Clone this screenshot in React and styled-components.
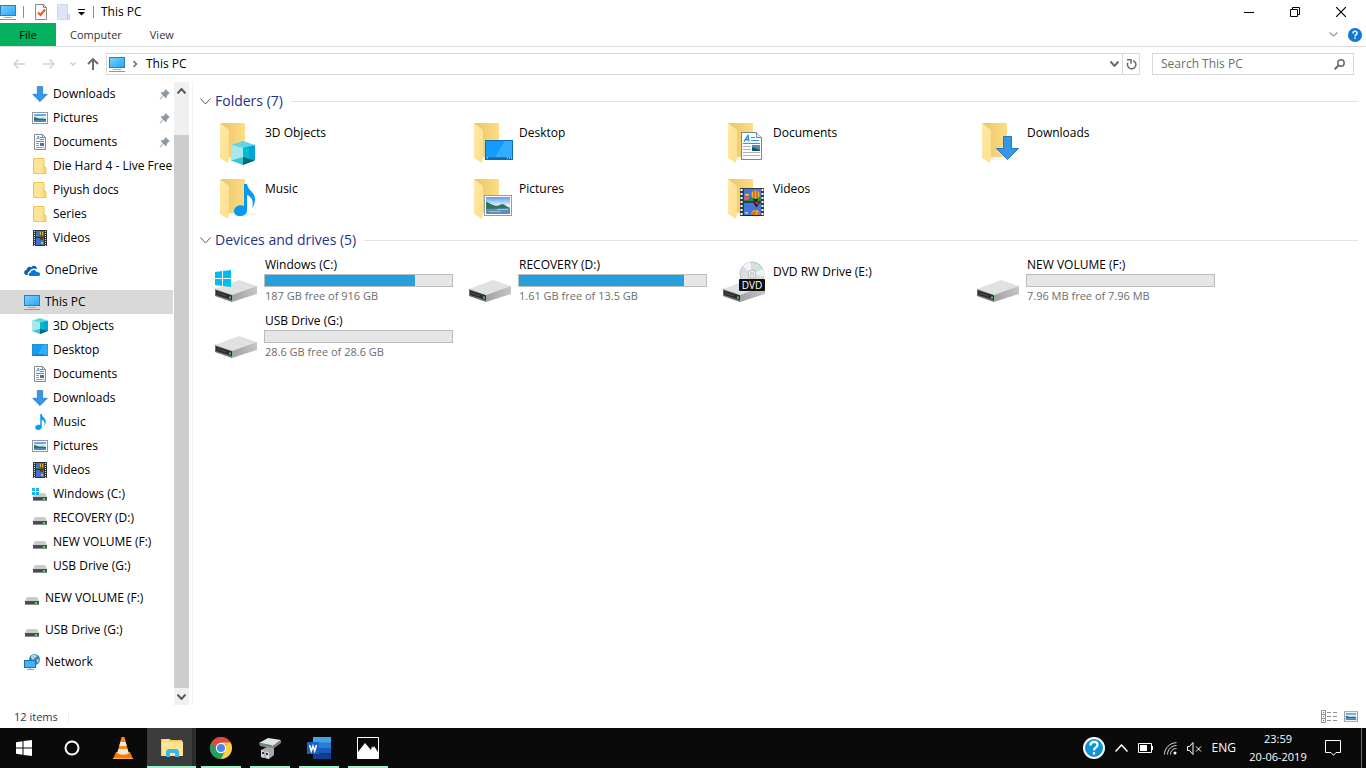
import React from 'react';
import styled, { createGlobalStyle } from 'styled-components';

const GlobalStyle = createGlobalStyle`
  * {
    box-sizing: border-box;
  }
  body {
    margin: 0;
    background: #ffffff;
    color: #000000;
    font-family: "Open Sans", "Noto Sans", sans-serif;
    font-size: 12px;
    line-height: 18px;
  }
  button, input {
    font: inherit;
    color: inherit;
    border: 0;
    padding: 0;
    background: none;
  }
  a {
    color: inherit;
    text-decoration: none;
  }
  svg {
    display: block;
    flex: none;
  }
`;

const Screen = styled.div`
  min-height: 100vh;
  display: flex;
  flex-direction: column;
`;

/* title bar */
const TitleBar = styled.header`
  height: 23px;
  display: flex;
  align-items: center;
`;
const Separator = styled.span`
  width: 1px;
  height: 12px;
  margin: 0 ${props => props.$after || 6}px 0 7px;
  background: #8c8c8c;
`;
const QuickButton = styled.button`
  margin-right: ${props => props.$gap || 0}px;
`;
const WindowTitle = styled.h1`
  flex: 1;
  margin: 0;
  font-size: 12px;
  font-weight: 400;
`;
const WindowButtons = styled.div`
  display: flex;
  padding-right: 2px;
`;
const WindowButton = styled.button`
  width: 46px;
  height: 21px;
  display: flex;
  align-items: center;
  justify-content: center;
`;

/* ribbon */
const Ribbon = styled.nav`
  height: 24px;
  display: flex;
  align-items: center;
  border-bottom: 1px solid #dadbdc;
`;
const FileTab = styled.button`
  width: 56px;
  height: 23px;
  background: #03b15e;
  font-size: 11px;
`;
const RibbonTab = styled.button`
  margin-left: 14px;
  margin-right: 14px;
  color: #333333;
  font-size: 11px;
`;
const RibbonEnd = styled.div`
  flex: 1;
  display: flex;
  justify-content: flex-end;
  align-items: center;
  gap: 10px;
  padding-right: 4px;
`;

/* address row */
const AddressRow = styled.div`
  display: flex;
  align-items: center;
  padding: 6px 12px 7px 13px;
`;
const NavButtons = styled.div`
  width: 93px;
  display: grid;
  grid-template-columns: 30px 27px 17px 12px;
  align-items: center;
`;
const AddressBox = styled.div`
  flex: 1;
  height: 22px;
  display: flex;
  align-items: center;
  border: 1px solid #d9d9d9;
  padding-left: 2px;
`;
const Crumb = styled.button`
  margin-left: 8px;
`;
const CrumbArrow = styled.span`
  margin-left: 8px;
`;
const AddressEnd = styled.div`
  flex: 1;
  display: flex;
  justify-content: flex-end;
  align-items: center;
  align-self: stretch;
  gap: 3px;
`;
const RefreshButton = styled.button`
  width: 17px;
  height: 20px;
  display: flex;
  align-items: center;
  justify-content: center;
  border-left: 1px solid #d9d9d9;
`;
const SearchBox = styled.form`
  width: 202px;
  height: 22px;
  margin-left: 12px;
  padding: 0 8px;
  display: flex;
  align-items: center;
  border: 1px solid #d9d9d9;
`;
const SearchInput = styled.input`
  flex: 1;
  min-width: 0;
  outline: none;
  &::placeholder {
    color: #6d6d6d;
    opacity: 1;
  }
`;

/* body */
const Body = styled.div`
  flex: 1;
  display: flex;
`;
const Sidebar = styled.nav`
  width: 173px;
  overflow: hidden;
`;
const SideGroup = styled.div`
  margin-bottom: 8px;
`;
const SideItem = styled.a`
  height: 24px;
  display: flex;
  align-items: center;
  gap: 5px;
  padding-left: ${props => (props.$nested ? 32 : 24)}px;
  background: ${props => (props.$active ? '#d9d9d9' : 'transparent')};
  white-space: nowrap;
`;
const IconSlot = styled.span`
  width: 16px;
  height: 16px;
  flex: none;
  display: flex;
  align-items: center;
  justify-content: center;
`;
const SideLabel = styled.span`
  flex: 1 0 auto;
`;
const PinSlot = styled.span`
  padding-right: 3px;
`;
const ScrollBar = styled.div`
  width: 15px;
  margin-left: 1px;
  display: flex;
  flex-direction: column;
  background: #f0f0f0;
`;
const ScrollButton = styled.button`
  height: 17px;
  display: flex;
  align-items: center;
  justify-content: center;
`;
const ScrollThumb = styled.div`
  flex: 1;
  margin-top: 36px;
  background: #cdcdcd;
`;
const Main = styled.main`
  flex: 1;
  margin-left: 3px;
  padding: 8px 8px 0 7px;
  border-left: 1px solid #f2f2f2;
`;
const GroupHeading = styled.h2`
  height: 22px;
  margin: 0 0 5px;
  display: flex;
  align-items: center;
  gap: 4px;
  color: #1e3287;
  font-size: 14px;
  font-weight: 400;
  &::after {
    content: '';
    flex: 1;
    height: 1px;
    margin-left: 4px;
    background: #e2e2e2;
  }
`;
const TileGrid = styled.div`
  display: grid;
  grid-template-columns: repeat(auto-fill, 254px);
  grid-auto-rows: 56px;
  padding-left: 11px;
`;
const Tile = styled.a`
  display: flex;
  gap: 5px;
`;
const TileIcon = styled.svg`
  width: 48px;
  height: 48px;
  margin-top: 4px;
`;
const TileBody = styled.div`
  width: 189px;
  padding-top: ${props => (props.$single ? 7 : 0)}px;
`;
const TileText = styled.div`
  padding-left: 1px;
  color: ${props => (props.$muted ? '#6d6d6d' : '#000000')};
  font-size: ${props => (props.$muted ? 11 : 12)}px;
`;
const UsageBar = styled.div`
  height: 13px;
  border: 1px solid #bcbcbc;
  background: #e6e6e6;
`;
const UsageFill = styled.div`
  height: 11px;
  background: #26a0da;
`;

const StatusBar = styled.footer`
  height: 23px;
  display: flex;
  align-items: center;
  padding: 0 8px 0 14px;
  color: #1e395b;
`;
const StatusText = styled.span`
  width: 55px;
  border-right: 1px solid #f0f0f0;
  font-size: 11px;
  line-height: 12px;
`;
const ViewButtons = styled.div`
  flex: 1;
  display: flex;
  justify-content: flex-end;
  align-items: center;
  gap: 7px;
`;

/* taskbar */
const Taskbar = styled.div`
  height: 40px;
  display: flex;
  background: #0a0a0b;
  color: #ffffff;
`;
const SystemButton = styled.button`
  width: 48px;
  display: flex;
  align-items: center;
  justify-content: center;
`;
const AppList = styled.div`
  flex: 1;
  display: flex;
  padding-left: 2px;
`;
const AppButton = styled.button`
  width: 49px;
  display: flex;
  align-items: center;
  justify-content: center;
  position: relative;
  background: ${props => (props.$active ? 'linear-gradient(90deg, #3c3c3d 45px, #202021 45px, #2c2c2d 46px)' : 'none')};
  &::after {
    content: '';
    display: ${props => (props.$running ? 'block' : 'none')};
    position: absolute;
    bottom: 0;
    left: ${props => (props.$active ? 0 : 5)}px;
    right: ${props => (props.$active ? 0 : 4)}px;
    height: 2px;
    background: #a0efc8;
  }
`;
const Tray = styled.div`
  display: flex;
  align-items: center;
  gap: 10px;
`;
const Clock = styled.button`
  width: 64px;
  font-size: 11px;
  text-align: center;
  white-space: nowrap;
`;
const ActionButton = styled.button`
  width: 26px;
  display: flex;
  justify-content: center;
`;
const ShowDesktop = styled.button`
  width: 5px;
  margin-left: 5px;
  align-self: stretch;
  border-left: 1px solid #6a6a6a;
`;

/* glyphs, used both in the tree and over the big folders */
const Pc = props => (
  <svg width="16" height="16" viewBox="0 0 16 16" {...props}>
    <defs>
      <linearGradient id="pcScreen" x1="0" y1="0" x2="1" y2="1">
        <stop offset="0" stopColor="#7cd0ff" />
        <stop offset="1" stopColor="#27a6f7" />
      </linearGradient>
    </defs>
    <rect x=".5" y="1.500" width="15" height="10" fill="url(#pcScreen)" stroke="#2d7fb3" />
    <path d="M4 13.500h8" stroke="#9fb2bf" />
    <path d="M0 15.500h16" stroke="#7e9cae" />
  </svg>
);

const Cube = props => (
  <svg width="16" height="16" viewBox="0 0 24 24" {...props}>
    <path d="M12 0 24 4 12 9 0 4z" fill="#5fd6e4" />
    <path d="M0 4 12 7v13L0 20z" fill="#c4f1f1" />
    <path d="M0 4 12 7v10L0 20z" fill="#a9e8ea" />
    <path d="M12 7 24 4v15l-12 5z" fill="#00a5d8" />
    <path d="M12 7 18 5.500v13L12 24z" fill="#00bcd0" />
    <path d="M0 19.500 12 16v8z" fill="#3fc3cd" />
    <path d="M12 16 24 19.500 12 24z" fill="#00687f" />
  </svg>
);

const Desktop = props => (
  <svg width="16" height="12" viewBox="0 0 28 20" preserveAspectRatio="none" {...props}>
    <rect x=".5" y=".5" width="27" height="19" fill="#149bfb" stroke="#0a6fb8" />
    <path d="M20 1h7v16H10z" fill="#35adff" />
    <path d="M1 17.500h26V19H1z" fill="#0b68ad" />
    <path d="M2 18h1M22 18h1M24 18h1M26 18h1" stroke="#ffffff" />
  </svg>
);

const Doc = props => (
  <svg width="21" height="28" viewBox="0 0 21 28" {...props}>
    <path d="M.5.500h15l5 5v22H.5z" fill="#fbfcfd" stroke="#7f8487" />
    <path d="M15.500.500v5h5" fill="#e6e8ea" stroke="#7f8487" />
    <path d="M3 9.500 7 3.500 8 9.500M4.500 7.500h3" fill="none" stroke="#1b8ad6" strokeWidth="1.300" />
    <path d="M10 5.500h4M10 8.500h8M2 11.500h17" stroke="#2b9be0" />
    <path d="M2 14.500h8M2 17.500h8M2 20.500h17M2 23.500h17" stroke="#aeb3b7" />
    <path d="M11 13h8v6h-8z" fill="#4a8ed0" />
    <path d="M11 15l8 3v1h-8z" fill="#24544f" />
  </svg>
);

const DocSmall = () => (
  <svg width="12" height="16" viewBox="0 0 12 16">
    <path d="M.5.500h8l3 3v12H.5z" fill="#fbfcfd" stroke="#85898c" />
    <path d="M8.500.500v3h3" fill="none" stroke="#85898c" />
    <path d="M2.500 5.500 4.500 2l.5 3.500M6 3.500h2M6 5.500h4M2 7.500h8" fill="none" stroke="#2b9be0" />
    <path d="M2 9.500h3M2 11.500h3M2 13.500h8" stroke="#9aa0a4" />
    <path d="M6 9h4v3H6z" fill="#3a7ca5" />
  </svg>
);

const Down = props => (
  <svg width="16" height="16" viewBox="0 0 23 24" {...props}>
    <path d="M7.500.500h8v12h7L11.500 23.500.500 12.500h7z" fill="#3697e8" stroke="#2379c4" />
  </svg>
);

const Note = props => (
  <svg width="11" height="16" viewBox="0 0 21 32" {...props}>
    <path d="M10 0h3c1 7 8 8 8 15 0 4-1 6-3 9 2-7 0-11-5-13v15c0 4-3 6-7 6-4 0-6-2-6-5 0-4 5-7 10-5z" fill="#069af3" />
  </svg>
);

const Picture = props => (
  <svg width="28" height="21" viewBox="0 0 28 21" {...props}>
    <defs>
      <linearGradient id="sky" x1="0" y1="0" x2="0" y2="1">
        <stop offset="0" stopColor="#5b9df0" />
        <stop offset=".5" stopColor="#e4f2fc" />
        <stop offset="1" stopColor="#6f9fc6" />
      </linearGradient>
    </defs>
    <rect x=".5" y=".5" width="27" height="20" fill="#ffffff" stroke="#979b9f" />
    <path d="M2 2h24v17H2z" fill="url(#sky)" />
    <path d="M2 7c2 0 4 2 7 3 3 1 4 1 7 0 2-2 4-1 6 1l4 2v1H2z" fill="#33735c" />
    <path d="M2 14l24-1v6H2z" fill="#5c8fb6" />
    <path d="M5 16.500h12M13 14.500h11" stroke="#9dc3dc" />
  </svg>
);

const PictureSmall = props => (
  <svg width="16" height="12" viewBox="0 0 16 12" {...props}>
    <rect x=".5" y=".5" width="15" height="11" fill="#ffffff" stroke="#92979b" />
    <path d="M2 2h12v8H2z" fill="#d6eafa" />
    <path d="M2 2h12v2H2z" fill="#6ba6f2" />
    <path d="M2 5c2 0 3 1.500 6 1.500 2 0 4-.5 6 .5v1H2z" fill="#2c7060" />
    <path d="M2 8h12v2H2z" fill="#4a86ba" />
  </svg>
);

const Film = props => (
  <svg width="14" height="16" viewBox="0 0 24 28" {...props}>
    <path d="M0 0h24v28H0z" fill="#3a3a3c" />
    <path d="M1.500 1v27M22.500 1v27" stroke="#ffffff" strokeWidth="2" strokeDasharray="2 2" />
    <path d="M4 1h17v12H4zM4 15h17v12H4z" fill="#3f78dc" />
    <path d="M4 9c3-2 6 1 9 1s5-1 8-1v4H4z" fill="#1d8c54" />
    <path d="M4 9c2-2 5-1 6 1l-2 2H4z" fill="#e0508c" />
    <circle cx="15.500" cy="6.500" r="4" fill="#f6b51e" />
    <path d="M14 3v7M17 3v7" stroke="#c62a1c" />
    <path d="M13 11h5l-1 2h-3zM13 14h7l-3 5h-1z" fill="#2a1a18" />
    <path d="M15 14h4l-2 3z" fill="#e2322b" />
    <circle cx="15.500" cy="26" r="4" fill="#f6b51e" />
    <path d="M15 22.500V27M18 24v3M13 24v3" stroke="#c62a1c" />
    <path d="M5 6h4v1.500H5zM5 24h3v1.500H5z" fill="#f2d04a" />
    <path d="M3 27h18v1H3z" fill="#222222" />
  </svg>
);

const FilmSmall = () => (
  <svg width="14" height="16" viewBox="0 0 14 16">
    <path d="M0 0h14v16H0z" fill="#303033" />
    <path d="M1.500 1v15M12.500 1v15" stroke="#e8e8e8" strokeDasharray="1 1" />
    <path d="M3 1h8v6H3zM3 8h8v7H3z" fill="#3f6fd0" />
    <path d="M3 5h8v2H3z" fill="#2d7a55" />
    <path d="M3 5h2v1H3z" fill="#d8578f" />
    <path d="M7 2h3v3H7zM8 12h2v2H8z" fill="#e8b526" />
    <path d="M8 2h1v3H8zM7 8h3v2H7z" fill="#8e2a24" />
  </svg>
);

const FolderSmall = () => (
  <svg width="14" height="16" viewBox="0 0 14 16">
    <path d="M.5.500h10.500v9h2v6H.5z" fill="#ffe593" stroke="#ebc550" />
    <path d="M11 9.500v6" stroke="#ebc550" />
  </svg>
);

const DriveSmall = ({ windows }) => (
  <svg width="16" height="16" viewBox="0 0 16 16">
    <path d="M3 7h10l2 4H1z" fill="#c9cbcd" />
    <path d="M1 11h14v4H1z" fill="#4c4f50" />
    <path d="M1 14.500h14" stroke="#8b8e90" />
    <path d="M11 12h2v2h-2z" fill="#2ee82e" />
    {windows && <path d="M0 2h3v3H0zM4 2h3v3H4zM0 6h3v3H0zM4 6h3v3H4z" fill="#17b6f0" />}
  </svg>
);

const Cloud = () => (
  <svg width="16" height="16" viewBox="0 0 16 16">
    <path d="M1 12.500C-.600 11 .200 8 2.500 8 2.800 5 6 4 7.500 5.300 9.500 2.500 13 4 13 7c-4-1.500-7 .5-7.500 2.500C3.500 10 3.300 12 4 13H2z" fill="#0a63b0" />
    <path d="M6 14c-2-.3-1.800-3.500.6-3.600C7 7.500 11.500 7 12.600 10 15 9.600 16.300 11 16 12.500c-.2 1-.9 1.500-1.600 1.500z" fill="#0b78d6" />
  </svg>
);

const NetworkIcon = () => (
  <svg width="16" height="16" viewBox="0 0 16 16">
    <circle cx="10.500" cy="5.500" r="5.500" fill="#3b88ab" />
    <path d="M7 2c2-2 5-1.500 6 0-1 2-2 1-3 3S7 5 7 2zM12 6l3-1-1 4z" fill="#aad6e6" />
    <rect x=".5" y="6.500" width="11" height="7" fill="#43b4fb" stroke="#1e6ea8" />
    <path d="M3 15.500h7M6 14v1" stroke="#8ba5b5" />
  </svg>
);

const Pin = () => (
  <svg width="11" height="11" viewBox="0 0 11 11">
    <path d="M6.500 0 11 4.500 9.500 5 8 6.500 7.500 9.500 4.500 7 1 10.500.500 10 4 6.500 1.500 3.500 4.500 3 6 1.500z" fill="#8b98a1" />
  </svg>
);

const Arrow = ({ dir, color, size = 12 }) => (
  <svg width={size} height="12" viewBox="0 0 12 12" fill="none" stroke={color} strokeWidth="1.500">
    {dir === 'left' && <path d="M12 6H1M5.500 1.500 1 6l4.500 4.500" />}
    {dir === 'right' && <path d="M0 6h11M6.500 1.500 11 6l-4.500 4.500" />}
    {dir === 'up' && <path d="M6 12V1M1 6l5-5 5 5" strokeWidth="2" />}
  </svg>
);

const Chevron = ({ w = 8, h = 5, color = '#5a5a5a', stroke = 2, up }) => (
  <svg width={w} height={h} viewBox={`0 0 ${w} ${h}`} fill="none" stroke={color} strokeWidth={stroke}>
    <path d={up ? `M.5 ${h - 0.5} ${w / 2} 1 ${w - 0.5} ${h - 0.5}` : `M.5 .5 ${w / 2} ${h - 1} ${w - 0.5} .5`} />
  </svg>
);

const FolderBase = () => (
  <g>
    <defs>
      <linearGradient id="folderBack" x1="0" y1="0" x2="1" y2="0">
        <stop offset="0" stopColor="#e8c566" />
        <stop offset="1" stopColor="#fddd86" />
      </linearGradient>
      <linearGradient id="folderFlap" x1="0" y1="0" x2="1" y2="1">
        <stop offset="0" stopColor="#ffe9a8" />
        <stop offset="1" stopColor="#fddf8c" />
      </linearGradient>
    </defs>
    <path d="M17 36h29l-3 3H18z" fill="#f4f4f4" />
    <path d="M9 2h25v34H17z" fill="url(#folderBack)" />
    <path d="M9 2l9 7v27l-1 6-8-5z" fill="url(#folderFlap)" />
  </g>
);

const DriveBase = () => (
  <g>
    <defs>
      <linearGradient id="driveSide" x1="0" y1="0" x2="1" y2="0">
        <stop offset="0" stopColor="#a0a1a3" />
        <stop offset="1" stopColor="#c5c6c8" />
      </linearGradient>
    </defs>
    <path d="M4 29 28 20l18 6-25 9z" fill="#e0e1e3" />
    <path d="M21 35l25-9v8l-25 8z" fill="url(#driveSide)" />
    <path d="M4 29l17 6v7L4 36z" fill="#6d6f70" />
    <path d="M5 30.500l16 5v4.500L5 35z" fill="#2b2d2e" />
    <path d="M6 33l9 3" stroke="#4d5052" />
    <path d="M18 36.500h2v2h-2z" fill="#30e030" />
  </g>
);

const overlays = {
  cube: <Cube x="20" y="20" width="24" height="24" />,
  desktop: <Desktop x="20" y="19" width="28" height="20" />,
  doc: <Doc x="22" y="11" />,
  down: <Down x="23" y="15" width="23" height="24" />,
  note: <Note x="23" y="7" width="21" height="32" />,
  picture: <Picture x="19" y="18" />,
  film: <Film x="21" y="11" width="24" height="28" />,
  windows: <path d="M4 12l7-1v7H4zM12 11l8-1v8h-8zM4 19h7v7l-7-1zM12 19h8v8l-8-1z" fill="#00bcf2" />,
  dvd: (
    <g>
      <circle cx="33" cy="14" r="12" fill="#d9dfe0" stroke="#b9bfc1" />
      <path d="M33 14 24 6a12 12 0 0 1 7-4zM33 14l11-5a12 12 0 0 1 1 7z" fill="#f3f6f6" />
      <path d="M33 14 22 11a12 12 0 0 1 2-4z" fill="#e9d3ec" />
      <path d="M33 14l8-8 2 3z" fill="#bdebd5" />
      <circle cx="33" cy="14" r="4" fill="#eef1f1" stroke="#b4babb" />
      <circle cx="33" cy="14" r="1.500" fill="#ffffff" stroke="#b4babb" />
      <rect x="20" y="19" width="26" height="12" rx="1" fill="#111111" />
      <text x="33" y="28.500" fontSize="10" textAnchor="middle" fill="#ffffff">DVD</text>
    </g>
  ),
};

const quickItems = [
  { label: 'Downloads', icon: <Down />, pinned: true },
  { label: 'Pictures', icon: <PictureSmall />, pinned: true },
  { label: 'Documents', icon: <DocSmall />, pinned: true },
  { label: 'Die Hard 4 - Live Free O', icon: <FolderSmall /> },
  { label: 'Piyush docs', icon: <FolderSmall /> },
  { label: 'Series', icon: <FolderSmall /> },
  { label: 'Videos', icon: <FilmSmall /> },
];

const pcItems = [
  { label: '3D Objects', icon: <Cube /> },
  { label: 'Desktop', icon: <Desktop /> },
  { label: 'Documents', icon: <DocSmall /> },
  { label: 'Downloads', icon: <Down /> },
  { label: 'Music', icon: <Note /> },
  { label: 'Pictures', icon: <PictureSmall /> },
  { label: 'Videos', icon: <FilmSmall /> },
  { label: 'Windows (C:)', icon: <DriveSmall windows /> },
  { label: 'RECOVERY (D:)', icon: <DriveSmall /> },
  { label: 'NEW VOLUME (F:)', icon: <DriveSmall /> },
  { label: 'USB Drive (G:)', icon: <DriveSmall /> },
];

const folders = [
  { label: '3D Objects', overlay: 'cube' },
  { label: 'Desktop', overlay: 'desktop' },
  { label: 'Documents', overlay: 'doc' },
  { label: 'Downloads', overlay: 'down' },
  { label: 'Music', overlay: 'note' },
  { label: 'Pictures', overlay: 'picture' },
  { label: 'Videos', overlay: 'film' },
];

const drives = [
  { label: 'Windows (C:)', overlay: 'windows', used: 80, free: '187 GB free of 916 GB' },
  { label: 'RECOVERY (D:)', used: 88, free: '1.61 GB free of 13.5 GB' },
  { label: 'DVD RW Drive (E:)', overlay: 'dvd' },
  { label: 'NEW VOLUME (F:)', used: 0, free: '7.96 MB free of 7.96 MB' },
  { label: 'USB Drive (G:)', used: 0, free: '28.6 GB free of 28.6 GB' },
];

function TreeItem({ icon, label, pinned, nested, active }) {
  return (
    <SideItem href="#" $nested={nested} $active={active}>
      <IconSlot>{icon}</IconSlot>
      <SideLabel>{label}</SideLabel>
      {pinned && <PinSlot><Pin /></PinSlot>}
    </SideItem>
  );
}

function Title() {
  return (
    <TitleBar>
      <Pc />
      <Separator $after={11} />
      <QuickButton aria-label="Properties" $gap={10}>
        <svg width="12" height="16" viewBox="0 0 12 16">
          <path d="M.5.500h8l3 3v12H.5z" fill="#fafafa" stroke="#8a8a8a" />
          <path d="M8.500.500v3h3" fill="none" stroke="#8a8a8a" />
          <path d="M3 8.500l2.500 2.500L10 5.500" fill="none" stroke="#e8571c" strokeWidth="2" />
        </svg>
      </QuickButton>
      <QuickButton aria-label="New folder" $gap={8}>
        <svg width="13" height="16" viewBox="0 0 13 16">
          <path d="M.5.500h10v10h2v5H.5z" fill="#dbe5f5" stroke="#ccd8ec" />
          <path d="M10.500 10v5" stroke="#b9c8e0" />
        </svg>
      </QuickButton>
      <QuickButton aria-label="Customize Quick Access Toolbar">
        <svg width="8" height="8" viewBox="0 0 8 8">
          <path d="M0 1.500h7" stroke="#000000" />
          <path d="M0 4h7L3.500 7.500z" />
        </svg>
      </QuickButton>
      <Separator $after={7} />
      <WindowTitle>This PC</WindowTitle>
      <WindowButtons>
        <WindowButton aria-label="Minimize">
          <svg width="10" height="10"><path d="M0 5.500h10" stroke="#000000" /></svg>
        </WindowButton>
        <WindowButton aria-label="Restore">
          <svg width="10" height="10" fill="none" stroke="#000000">
            <path d="M.5 2.500h7v7h-7zM2.500 2.500v-2h7v7h-2" />
          </svg>
        </WindowButton>
        <WindowButton aria-label="Close">
          <svg width="10" height="10"><path d="M0 0l10 10M10 0 0 10" stroke="#000000" strokeWidth="1.200" /></svg>
        </WindowButton>
      </WindowButtons>
    </TitleBar>
  );
}

function Address() {
  return (
    <AddressRow>
      <NavButtons>
        <button aria-label="Back"><Arrow dir="left" color="#d2d2d2" /></button>
        <button aria-label="Forward"><Arrow dir="right" color="#d2d2d2" /></button>
        <button aria-label="Recent locations"><Chevron w={6} h={4} color="#cfcfcf" stroke={1.5} /></button>
        <button aria-label="Up"><Arrow dir="up" color="#6e6e6e" /></button>
      </NavButtons>
      <AddressBox>
        <Pc />
        <CrumbArrow>
          <svg width="5" height="8" viewBox="0 0 5 8" fill="none" stroke="#6a6a6a" strokeWidth="1.500">
            <path d="M.5 1 3.500 4l-3 3" />
          </svg>
        </CrumbArrow>
        <Crumb>This PC</Crumb>
        <AddressEnd>
          <button aria-label="Previous locations"><Chevron w={9} h={6} color="#6a6a6a" /></button>
          <RefreshButton aria-label="Refresh">
            <svg width="11" height="12" viewBox="0 0 11 12" fill="none" stroke="#6a6a6a" strokeWidth="1.500">
              <path d="M7 2.600A4.200 4.200 0 1 1 2 4.500" />
              <path d="M1 1.700h4v4" />
            </svg>
          </RefreshButton>
        </AddressEnd>
      </AddressBox>
      <SearchBox role="search">
        <SearchInput type="text" placeholder="Search This PC" aria-label="Search This PC" />
        <svg width="11" height="11" viewBox="0 0 11 11" fill="none" stroke="#6a6a6a">
          <circle cx="7" cy="4" r="3.200" strokeWidth="1.500" />
          <path d="M4.500 6.500.700 10.300" strokeWidth="2" />
        </svg>
      </SearchBox>
    </AddressRow>
  );
}

function Folders() {
  return (
    <section>
      <GroupHeading><Chevron w={11} h={7} stroke={1} />Folders (7)</GroupHeading>
      <TileGrid>
        {folders.map(folder => (
          <Tile href="#" key={folder.label}>
            <TileIcon viewBox="0 0 48 48">
              <FolderBase />
              {overlays[folder.overlay]}
            </TileIcon>
            <TileBody $single>
              <TileText>{folder.label}</TileText>
            </TileBody>
          </Tile>
        ))}
      </TileGrid>
    </section>
  );
}

function Drives() {
  return (
    <section>
      <GroupHeading><Chevron w={11} h={7} stroke={1} />Devices and drives (5)</GroupHeading>
      <TileGrid>
        {drives.map(drive => (
          <Tile href="#" key={drive.label}>
            <TileIcon viewBox="0 0 48 48">
              <DriveBase />
              {overlays[drive.overlay]}
            </TileIcon>
            <TileBody $single={!drive.free}>
              <TileText>{drive.label}</TileText>
              {drive.free && (
                <>
                  <UsageBar>
                    <UsageFill style={{ width: `${drive.used}%` }} />
                  </UsageBar>
                  <TileText $muted>{drive.free}</TileText>
                </>
              )}
            </TileBody>
          </Tile>
        ))}
      </TileGrid>
    </section>
  );
}

function TaskbarRow() {
  return (
    <Taskbar>
      <SystemButton aria-label="Start">
        <svg width="16" height="16" viewBox="0 0 16 16">
          <path d="M0 2.200 6.500 1.300v6.200H0zM7.500 1.100 16 0v7.500H7.500zM0 8.500h6.500v6.200L0 13.800zM7.500 8.500H16V16l-8.500-1.100z" fill="#ffffff" />
        </svg>
      </SystemButton>
      <SystemButton aria-label="Cortana">
        <svg width="16" height="16"><circle cx="8" cy="8" r="6.500" fill="none" stroke="#ffffff" strokeWidth="2" /></svg>
      </SystemButton>
      <AppList>
        <AppButton aria-label="VLC media player">
          <svg width="20" height="22" viewBox="0 0 20 22">
            <path d="M3 15h14l3 7H0z" fill="#f07c00" />
            <path d="M8.500 0h3L16 17c-2 2-10 2-12 0z" fill="#f58a12" />
            <path d="M7.500 5h5l1.200 4H6.300zM5.500 12h9l1.200 4c-3 2-8 2-11.400 0z" fill="#e9e9e9" />
            <path d="M0 21h20v1H0z" fill="#ffb04a" />
          </svg>
        </AppButton>
        <AppButton aria-label="File Explorer" $running $active>
          <svg width="22" height="18" viewBox="0 0 22 18">
            <path d="M0 0h9l1 1h11v16H0z" fill="#f5c74c" />
            <path d="M1 2.500h21V17H1z" fill="#ffe48f" />
            <path d="M2 1h6" stroke="#ffffff" />
            <path d="M5 18v-6l2-2h9l2 2v6h-4v-4H9v4z" fill="#3fb4e8" />
          </svg>
        </AppButton>
        <AppButton aria-label="Google Chrome" $running>
          <svg width="22" height="22" viewBox="0 0 22 22">
            <circle cx="11" cy="11" r="11" fill="#dd4b3e" />
            <path d="M11 11 20.500 5.500A11 11 0 0 1 11 22z" fill="#fdcf45" />
            <path d="M1.500 5.500 11 11l3.500 4L11 22A11 11 0 0 1 1.500 5.500z" fill="#1fa261" />
            <path d="M1.500 5.500A11 11 0 0 1 20.500 5.500H11L6.500 13z" fill="#dd4b3e" />
            <path d="M11 5.500h9.500l.8 2H14z" fill="#fdcf45" />
            <circle cx="11" cy="11" r="5.200" fill="#ffffff" />
            <circle cx="11" cy="11" r="4" fill="#4a88ee" />
          </svg>
        </AppButton>
        <AppButton aria-label="Device tool" $running>
          <svg width="22" height="22" viewBox="0 0 22 22">
            <path d="M0 6 9 1l13 2-8 6z" fill="#e2e4e4" />
            <path d="M0 6l14 3 8-6v3l-8 6L1 9z" fill="#7f8383" />
            <path d="M2 6.500 12 8.500" stroke="#4e9a62" />
            <path d="M2 13l6-3 7 1v7l-5 4-8-2z" fill="#a5a8a8" />
            <path d="M2 13l8 2v7l-8-2z" fill="#d5d7d7" />
            <path d="M4 15v2M8 16v2" stroke="#38393a" strokeWidth="2" />
            <path d="M6 14v7" stroke="#8a8d8d" />
          </svg>
        </AppButton>
        <AppButton aria-label="Word" $running>
          <svg width="24" height="22" viewBox="0 0 24 22">
            <path d="M6 0h18v6H6z" fill="#41a5ee" />
            <path d="M6 5.500h18V11H6z" fill="#2b7cd3" />
            <path d="M6 11h18v5.500H6z" fill="#185abd" />
            <path d="M6 16.500h18V22H6z" fill="#103f91" />
            <path d="M0 5h12v12H0z" fill="#1b5fc0" />
            <path d="M2.500 8l1.800 6L6 9l1.700 5L9.500 8" fill="none" stroke="#ffffff" strokeWidth="1.500" />
          </svg>
        </AppButton>
        <AppButton aria-label="Photos" $running>
          <svg width="22" height="22" viewBox="0 0 22 22">
            <path d="M.5.500h21v21H.5z" fill="#0a0a0b" stroke="#ffffff" />
            <path d="M1 15 8 6l6 7 1-4 1 2 1-2 4 6v6H1z" fill="#ffffff" />
          </svg>
        </AppButton>
      </AppList>
      <Tray>
        <button aria-label="Help">
          <svg width="22" height="22" viewBox="0 0 22 22">
            <circle cx="11" cy="11" r="10" fill="#0d93d8" stroke="#ffffff" strokeWidth="2" />
            <path d="M7.500 8.500c0-5 7-4.500 7-.500 0 2.500-3.500 2.500-3.500 5.500M11 15v2.500" fill="none" stroke="#ffffff" strokeWidth="2.200" />
          </svg>
        </button>
        <button aria-label="Show hidden icons"><Chevron w={13} h={8} stroke={1.5} color="#ffffff" up /></button>
        <button aria-label="Battery">
          <svg width="16" height="10" viewBox="0 0 16 10">
            <path d="M.5.500h13v9H.5z" fill="none" stroke="#ffffff" />
            <path d="M2 2h7v6H2zM14 3h1v4h-1z" fill="#ffffff" />
          </svg>
        </button>
        <button aria-label="Network">
          <svg width="13" height="13" viewBox="0 0 13 13" fill="none" stroke="#d8d8d8">
            <path d="M.5 12.500C.5 6 6 .700 12.500.700M3.500 12.500c0-5 4-9 9-9M6.500 12.500c0-3.500 2.500-6 6-6" />
            <circle cx="11" cy="11" r="1.500" fill="#ffffff" stroke="none" />
          </svg>
        </button>
        <button aria-label="Volume muted">
          <svg width="15" height="13" viewBox="0 0 15 13" fill="none" stroke="#ffffff">
            <path d="M.5 4.500h2l3.500-4v12l-3.500-4h-2zM9 4.500l5 5M14 4.500l-5 5" />
          </svg>
        </button>
        <button>ENG</button>
        <Clock>23:59<br />20-06-2019</Clock>
        <ActionButton aria-label="Notifications">
          <svg width="17" height="16" viewBox="0 0 17 16" fill="none" stroke="#ffffff">
            <path d="M.5.500h15v12H11l-2.500 2.800L6 12.500H.5z" />
          </svg>
        </ActionButton>
        <ShowDesktop aria-label="Show desktop" />
      </Tray>
    </Taskbar>
  );
}

function App() {
  return (
    <Screen>
      <GlobalStyle />
      <Title />
      <Ribbon>
        <FileTab>File</FileTab>
        <RibbonTab>Computer</RibbonTab>
        <RibbonTab>View</RibbonTab>
        <RibbonEnd>
          <button aria-label="Expand the Ribbon"><Chevron w={9} h={5} stroke={1.2} color="#9a9a9a" /></button>
          <button aria-label="Help">
            <svg width="14" height="14" viewBox="0 0 14 14">
              <circle cx="7" cy="7" r="7" fill="#0f78d4" />
              <path d="M5 5.500c0-3 4-2.700 4-.3C9 7 7 6.800 7 8.500M7 9.500V11" fill="none" stroke="#ffffff" strokeWidth="1.500" />
            </svg>
          </button>
        </RibbonEnd>
      </Ribbon>
      <Address />
      <Body>
        <Sidebar>
          <SideGroup>
            {quickItems.map(item => <TreeItem key={item.label} nested {...item} />)}
          </SideGroup>
          <SideGroup>
            <TreeItem icon={<Cloud />} label="OneDrive" />
          </SideGroup>
          <SideGroup>
            <TreeItem icon={<Pc />} label="This PC" active />
            {pcItems.map(item => <TreeItem key={item.label} nested {...item} />)}
          </SideGroup>
          <SideGroup>
            <TreeItem icon={<DriveSmall />} label="NEW VOLUME (F:)" />
          </SideGroup>
          <SideGroup>
            <TreeItem icon={<DriveSmall />} label="USB Drive (G:)" />
          </SideGroup>
          <TreeItem icon={<NetworkIcon />} label="Network" />
        </Sidebar>
        <ScrollBar>
          <ScrollButton aria-label="Scroll up"><Chevron w={9} h={6} up /></ScrollButton>
          <ScrollThumb />
          <ScrollButton aria-label="Scroll down"><Chevron w={9} h={6} /></ScrollButton>
        </ScrollBar>
        <Main>
          <Folders />
          <Drives />
        </Main>
      </Body>
      <StatusBar>
        <StatusText>12 items</StatusText>
        <ViewButtons>
          <button aria-label="Details view">
            <svg width="16" height="13" viewBox="0 0 16 13" fill="none" stroke="#8e8e8e">
              <path d="M.5.500h4v12h-4zM.5 4.500h4M.5 8.500h4" />
              <path d="M6 2.500h4M12 2.500h4M6 6.500h4M12 6.500h4M6 10.500h4M12 10.500h4" />
              <path d="M2 2.500h1M2 6.500h1M2 10.500h1" stroke="#3c6fae" />
            </svg>
          </button>
          <button aria-label="Large icons view"><PictureSmall width="14" height="11" /></button>
        </ViewButtons>
      </StatusBar>
      <TaskbarRow />
    </Screen>
  );
}

export default App;
